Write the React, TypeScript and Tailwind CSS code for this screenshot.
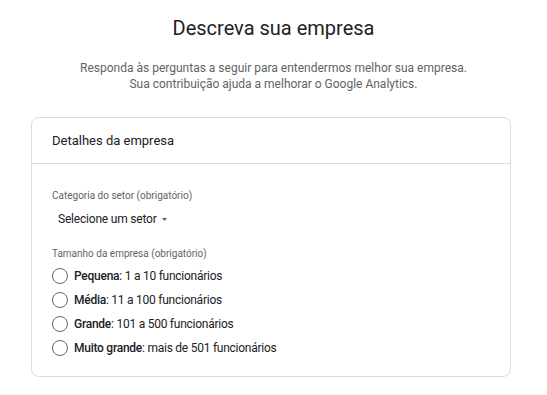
import React, { useState } from "react";

const sizes = [
  { bold: "Pequena", rest: ": 1 a 10 funcionários" },
  { bold: "Média", rest: ": 11 a 100 funcionários" },
  { bold: "Grande", rest: ": 101 a 500 funcionários" },
  { bold: "Muito grande", rest: ": mais de 501 funcionários" },
];

export default function App() {
  const [picked, setPicked] = useState<number | null>(null);

  return (
    <div className="w-[547px] h-[395px] bg-white font-['Roboto','Liberation_Sans',sans-serif] text-[#202124]">
      {/* heading */}
      <div className="flex flex-col items-center pt-[14px]">
        <h1 className="text-[20px] leading-[28px]">Descreva sua empresa</h1>
        <p className="mt-[18px] text-[12px] leading-[16px] text-[#5f6368] text-center">
          Responda às perguntas a seguir para entendermos melhor sua empresa.
          <br />
          Sua contribuição ajuda a melhorar o Google Analytics.
        </p>
      </div>

      {/* card */}
      <div className="mx-[31px] mt-[25px] w-[480px] h-[260px] border border-[#dadce0] rounded-[8px]">
        <div className="h-[46px] px-[20px] flex items-center border-b border-[#dadce0] text-[13px]">
          Detalhes da empresa
        </div>

        <div className="px-[20px] pt-[25px]">
          <div className="text-[10px] leading-[14px] text-[#5f6368]">
            Categoria do setor (obrigatório)
          </div>
          <button className="mt-[7px] ml-[6px] flex items-center gap-[5px] text-[12px] leading-[18px] tracking-[-0.2px]">
            Selecione um setor
            <svg width="5" height="3" viewBox="0 0 5 3">
              <path d="M0 0h5L2.5 3z" fill="#5f6368" />
            </svg>
          </button>

          <div className="mt-[19px] text-[10px] leading-[14px] text-[#5f6368]">
            Tamanho da empresa (obrigatório)
          </div>
          <div className="mt-[3px] flex flex-col">
            {sizes.map((s, i) => (
              <label
                key={s.bold}
                className="h-[24px] flex items-center gap-[6px] cursor-pointer"
                onClick={() => setPicked(i)}
              >
                <span className="w-[16px] h-[16px] rounded-full border-[1.5px] border-[#5f6368] flex items-center justify-center">
                  {picked === i && <span className="w-[8px] h-[8px] rounded-full bg-[#1a73e8]" />}
                </span>
                <span className="text-[12px] tracking-[-0.25px]">
                  <b className="font-medium">{s.bold}</b>
                  {s.rest}
                </span>
              </label>
            ))}
          </div>
        </div>
      </div>
    </div>
  );
}
